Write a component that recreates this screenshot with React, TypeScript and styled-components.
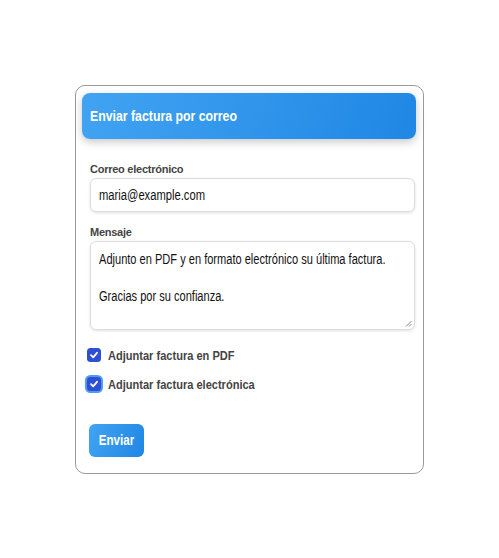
import React from "react";
import styled, { createGlobalStyle } from "styled-components";

const Global = createGlobalStyle`
  html, body { margin: 0; padding: 0; background: #fff; }
  body { font-family: "Liberation Sans", Arial, sans-serif; }
  * { box-sizing: border-box; }
`;

const Page = styled.div`
  min-height: 558px;
  display: flex;
  align-items: center;
  justify-content: center;
`;

const Card = styled.div`
  width: 349px;
  height: 389px;
  border: 1px solid #9a9a9a;
  border-radius: 10px;
  padding: 7px 7px 0 6px;
  background: #fff;
  display: flex;
  flex-direction: column;
`;

const Header = styled.div`
  height: 46px;
  border-radius: 8px;
  background: linear-gradient(110deg, #42a3f2 0%, #1f87e4 100%);
  box-shadow: 0 3px 8px rgba(0, 0, 0, 0.22);
  display: flex;
  align-items: center;
  padding-left: 8px;
`;

const Title = styled.h1`
  margin: 0;
  color: #fff;
  font-size: 15px;
  font-weight: 700;
  white-space: nowrap;
  transform: scaleX(0.82);
  transform-origin: left center;
`;

const Form = styled.form`
  display: flex;
  flex-direction: column;
  padding: 24px 1px 0 8px;
`;

const Label = styled.label`
  font-size: 11px;
  font-weight: 700;
  color: #444;
  letter-spacing: -0.25px;
  margin-bottom: 2px;
  line-height: 13px;
`;

const Field = styled.div<{ $h: number; $gap: number }>`
  height: ${(p) => p.$h}px;
  border: 1px solid #dcdcdc;
  border-radius: 6px;
  box-shadow: 0 1px 3px rgba(0, 0, 0, 0.12);
  padding: 0 8px;
  font-size: 14px;
  color: #111;
  position: relative;
  margin-bottom: ${(p) => p.$gap}px;
  overflow: hidden;
`;

const InputText = styled.div`
  line-height: 32px;
  white-space: nowrap;
  transform: scaleX(0.8);
  transform-origin: left center;
`;

const TextLines = styled.div`
  padding-top: 8px;
  line-height: 18.5px;
  width: 130%;
  transform: scaleX(0.79);
  transform-origin: left top;
`;

const Grip = styled.svg`
  position: absolute;
  right: 2px;
  bottom: 2px;
`;

const CheckRow = styled.div`
  display: flex;
  align-items: center;
  gap: 7px;
  height: 29px;
  margin-left: -3px;
`;

const Box = styled.span<{ $focus?: boolean }>`
  flex: none;
  width: 14px;
  height: 14px;
  border-radius: 3.5px;
  background: #2f4fd3;
  display: flex;
  align-items: center;
  justify-content: center;
  box-shadow: ${(p) => (p.$focus ? "0 0 0 2px #4a9cf5" : "none")};
`;

const CheckText = styled.span`
  font-size: 13px;
  font-weight: 700;
  color: #444;
  white-space: nowrap;
  transform: scaleX(0.85);
  transform-origin: left center;
`;

const Button = styled.button`
  margin-top: 25px;
  align-self: flex-start;
  margin-left: -1px;
  width: 55px;
  height: 33px;
  border: none;
  border-radius: 6px;
  background: linear-gradient(110deg, #42a3f2 0%, #1f87e4 100%);
  color: #fff;
  font-family: "Liberation Sans", Arial, sans-serif;
  font-size: 14px;
  font-weight: 700;
  padding: 0;
`;

const ButtonText = styled.span`
  display: inline-block;
  transform: scaleX(0.83);
`;

const Check = () => (
  <svg width="10" height="10" viewBox="0 0 10 10">
    <path d="M2 5.2 L4.2 7.3 L8 2.8" fill="none" stroke="#fff" strokeWidth="1.8" strokeLinecap="round" strokeLinejoin="round" />
  </svg>
);

export default function App() {
  return (
    <>
      <Global />
      <Page>
        <Card>
          <Header>
            <Title>Enviar factura por correo</Title>
          </Header>
          <Form onSubmit={(e) => e.preventDefault()}>
            <Label>Correo electrónico</Label>
            <Field $h={34} $gap={14}>
              <InputText>maria@example.com</InputText>
            </Field>
            <Label>Mensaje</Label>
            <Field $h={89} $gap={11}>
              <TextLines>
                Adjunto en PDF y en formato electrónico su última factura.
                <br />
                <br />
                Gracias por su confianza.
              </TextLines>
              <Grip width="7" height="7" viewBox="0 0 7 7">
                <path d="M6.5 1 L1 6.5 M6.5 4 L4 6.5" stroke="#888" strokeWidth="1" />
              </Grip>
            </Field>
            <CheckRow>
              <Box><Check /></Box>
              <CheckText>Adjuntar factura en PDF</CheckText>
            </CheckRow>
            <CheckRow>
              <Box $focus><Check /></Box>
              <CheckText>Adjuntar factura electrónica</CheckText>
            </CheckRow>
            <Button type="submit"><ButtonText>Enviar</ButtonText></Button>
          </Form>
        </Card>
      </Page>
    </>
  );
}
